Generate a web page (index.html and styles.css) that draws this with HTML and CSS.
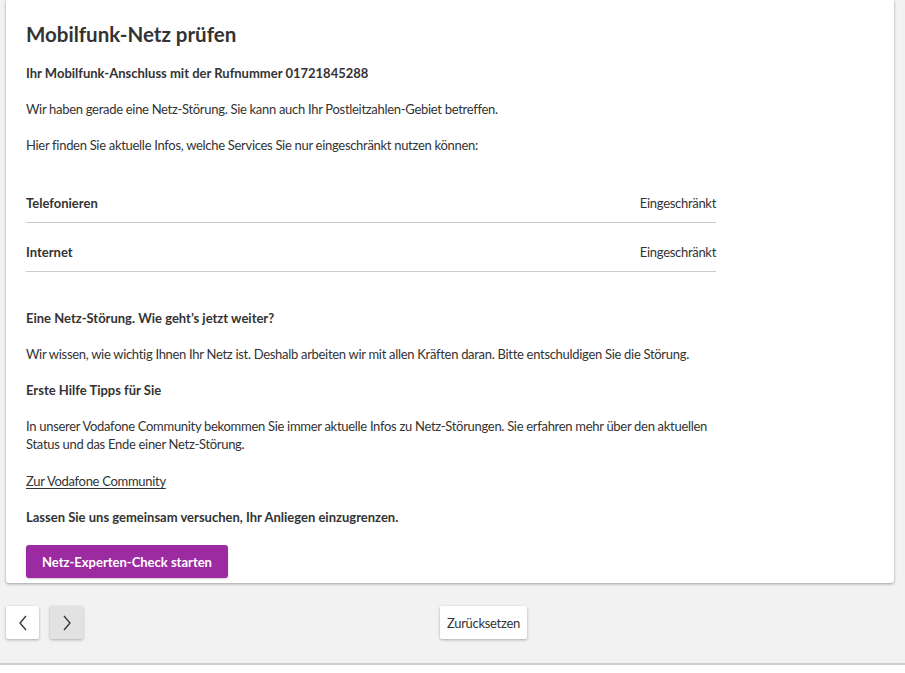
FILE: index.html
```html
<!DOCTYPE html>
<html lang="de">
<head>
<meta charset="utf-8">
<title>Mobilfunk-Netz prüfen</title>
<link rel="stylesheet" href="styles.css">
</head>
<body>
<div class="page">
  <main class="card">
    <h1 class="title">Mobilfunk-Netz prüfen</h1>
    <p class="strong first">Ihr Mobilfunk-Anschluss mit der Rufnummer 01721845288</p>
    <p class="text">Wir haben gerade eine Netz-Störung. Sie kann auch Ihr Postleitzahlen-Gebiet betreffen.</p>
    <p class="text">Hier finden Sie aktuelle Infos, welche Services Sie nur eingeschränkt nutzen können:</p>
    <ul class="services">
      <li class="service"><span class="service-name">Telefonieren</span><span class="service-state">Eingeschränkt</span></li>
      <li class="service"><span class="service-name">Internet</span><span class="service-state">Eingeschränkt</span></li>
    </ul>
    <p class="strong section">Eine Netz-Störung. Wie geht’s jetzt weiter?</p>
    <p class="text">Wir wissen, wie wichtig Ihnen Ihr Netz ist. Deshalb arbeiten wir mit allen Kräften daran. Bitte entschuldigen Sie die Störung.</p>
    <p class="strong">Erste Hilfe Tipps für Sie</p>
    <p class="text">In unserer Vodafone Community bekommen Sie immer aktuelle Infos zu Netz-Störungen. Sie erfahren mehr über den aktuellen Status und das Ende einer Netz-Störung.</p>
    <p class="text link-row"><a class="link" href="#">Zur Vodafone Community</a></p>
    <p class="strong">Lassen Sie uns gemeinsam versuchen, Ihr Anliegen einzugrenzen.</p>
    <button class="primary" type="button">Netz-Experten-Check starten</button>
  </main>
  <nav class="nav">
    <div class="arrows">
      <button class="arrow" type="button" aria-label="Zurück">
        <svg width="10" height="16" viewBox="0 0 10 16"><polyline points="8,1 2,8 8,15" fill="none" stroke="#333" stroke-width="1.3"/></svg>
      </button>
      <button class="arrow arrow-active" type="button" aria-label="Weiter">
        <svg width="10" height="16" viewBox="0 0 10 16"><polyline points="2,1 8,8 2,15" fill="none" stroke="#333" stroke-width="1.3"/></svg>
      </button>
    </div>
    <button class="reset" type="button">Zurücksetzen</button>
  </nav>
</div>
</body>
</html>
```
FILE: styles.css
```css
* { box-sizing: border-box; }
html, body { margin: 0; padding: 0; background: #fff; }
body {
  font-family: "Lato", "Liberation Sans", sans-serif;
  color: #333;
  font-size: 13px;
  line-height: 18px;
  letter-spacing: -0.3px;
}
.page {
  background: #f2f2f2;
  height: 665px;
  border-bottom: 2px solid #cfcfcf;
  padding: 0 11px 0 6px;
}
.card {
  background: #fff;
  box-shadow: 0 1px 3px rgba(0,0,0,0.35);
  border-radius: 0 0 3px 3px;
  padding: 20px 20px 5px 20px;
  height: 583px;
}
.title {
  margin: 0;
  font-size: 20.5px;
  line-height: 28px;
  font-weight: bold;
  letter-spacing: 0;
}
p { margin: 0; max-width: 690px; }
.strong { font-weight: bold; margin-top: 18px; letter-spacing: 0; }
.strong.first { margin-top: 16px; }
.strong.section { margin-top: 37px; }
.text { margin-top: 18px; }
.text.link-row { margin-top: 19px; }
.services {
  list-style: none;
  margin: 20px 0 0;
  padding: 0;
  width: 690px;
}
.service {
  display: flex;
  justify-content: space-between;
  padding: 20px 0 10px;
  border-bottom: 1px solid #cccccc;
}
.service-name { font-weight: bold; letter-spacing: 0; }
.link { color: #333; text-decoration: underline; text-underline-offset: 2px; }
.primary {
  margin-top: 19px;
  height: 33px;
  padding: 0 16px;
  border: 0;
  border-radius: 3px;
  background: #9c2aa0;
  color: #fff;
  font: bold 13px "Lato", sans-serif;
  box-shadow: 0 1px 2px rgba(0,0,0,0.2);
}
.nav {
  display: flex;
  align-items: center;
  padding-top: 23px;
}
.arrows { display: flex; gap: 11px; }
.arrow {
  width: 33px;
  height: 33px;
  padding: 0;
  border: 0;
  border-radius: 2px;
  background: #fff;
  box-shadow: 0 1px 3px rgba(0,0,0,0.3);
  display: flex;
  align-items: center;
  justify-content: center;
}
.arrow-active { background: #e2e2e2; }
.reset {
  margin-left: 357px;
  height: 33px;
  padding: 0 7px;
  border: 0;
  border-radius: 2px;
  background: #fff;
  box-shadow: 0 1px 3px rgba(0,0,0,0.3);
  color: #333;
  font: 13px "Lato", sans-serif;
  letter-spacing: -0.3px;
}
```
